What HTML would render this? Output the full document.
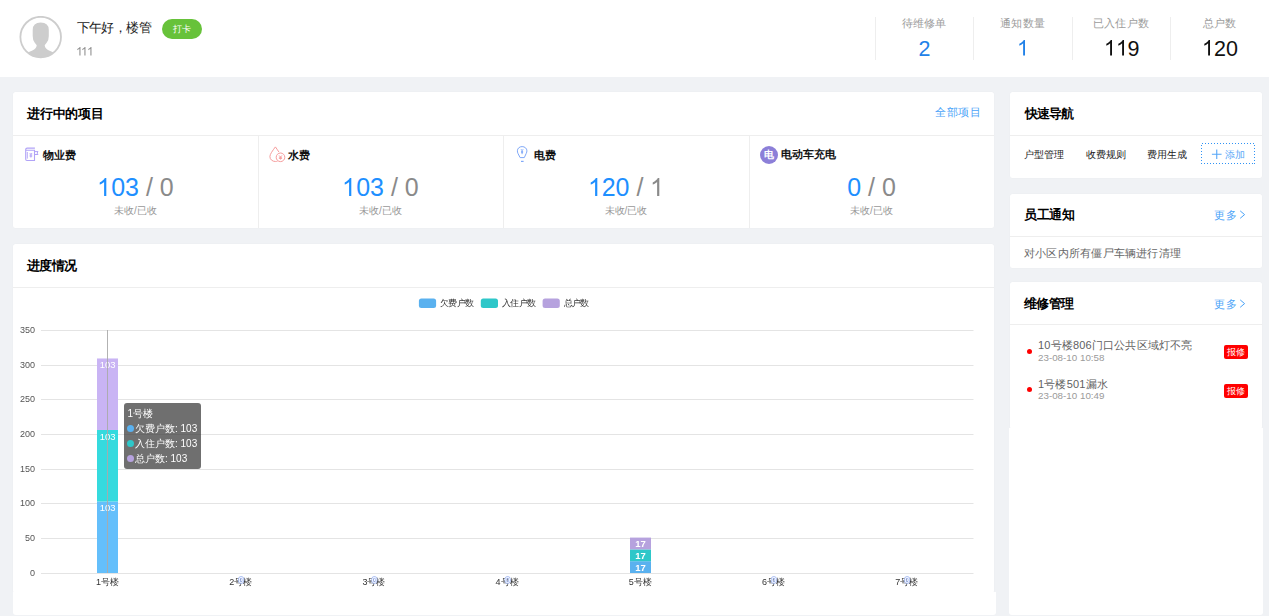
<!DOCTYPE html>
<html><head><meta charset="utf-8">
<style>
*{margin:0;padding:0;box-sizing:border-box}
html,body{width:1269px;height:616px;overflow:hidden;background:#f0f2f5;font-family:"Liberation Sans",sans-serif;color:#303133}
.a{position:absolute;white-space:nowrap}
.panel{position:absolute;background:#fff;border-radius:2.5px;box-shadow:0 0 1.5px rgba(0,0,0,0.045)}
.hdr{position:absolute;left:0;top:0;width:1269px;height:77px;background:#fff}
.sep{position:absolute;height:1px;background:#eeeeee}
.vsep{position:absolute;width:1px;background:#eeeeee}
.title{font-weight:bold;font-size:12.7px;color:#000}
.blue{color:#2181e8}
.link{color:#4aa3f8;font-size:11px;letter-spacing:0.5px}
.num{text-align:center;font-size:25px;color:#1e8fff}
.num .g{color:#8a8a8a}
.sub{text-align:center;font-size:10px;color:#999}
.badge{width:24px;height:14px;background:#f00;color:#fff;border-radius:2px;font-size:8.5px;line-height:14px;text-align:center}
.dot{display:inline-block;width:7px;height:7px;border-radius:50%;margin-right:1px;vertical-align:0}
.one{width:0.5562em;height:0.716em;overflow:visible;fill:currentColor;vertical-align:baseline}
.one3 .one{margin-right:-1.05px}
</style></head><body>
<div class="hdr">
  <!-- avatar -->
  <svg class="a" style="left:19px;top:16px" width="43" height="43" viewBox="0 0 43 43">
    <defs><clipPath id="cc"><circle cx="21.7" cy="21.1" r="20.3"/></clipPath></defs>
    <g clip-path="url(#cc)" fill="#cdcdcd">
      <path d="M13.7 14 Q13.7 6.5 21.7 6.5 Q29.8 6.5 29.8 14 L29.8 20 Q29.8 24 27.8 26.5 L25.7 29.3 Q26 32.8 30 34.5 Q36.5 36.5 38.5 41 L38.5 45 L5 45 L5 41 Q7 36.5 13.4 34.5 Q17.4 32.8 17.7 29.3 L15.6 26.5 Q13.7 24 13.7 20 Z"/>
    </g>
    <circle cx="21.7" cy="21.1" r="20.3" fill="none" stroke="#cdcdcd" stroke-width="1.8"/>
  </svg>
  <div class="a" style="left:76.5px;top:18.7px;font-size:13px;letter-spacing:-0.56px;color:#222">下午好，楼管</div>
  <div class="a" style="left:162px;top:19px;width:40px;height:20px;border-radius:10px;background:#67c23a;color:#fff;font-size:9px;text-align:center;line-height:20px">打卡</div>
  <div class="a one3" style="left:75.5px;top:45px;font-size:12px;color:#8c8c8c"><svg class="one" viewBox="0 -1466 1139 1466"><path transform="scale(1,-1)" d="M763 0H583V1147Q518 1085 412 1023T222 930V1104Q372 1174 484 1274T643 1466H763Z"/></svg><svg class="one" viewBox="0 -1466 1139 1466"><path transform="scale(1,-1)" d="M763 0H583V1147Q518 1085 412 1023T222 930V1104Q372 1174 484 1274T643 1466H763Z"/></svg><svg class="one" viewBox="0 -1466 1139 1466"><path transform="scale(1,-1)" d="M763 0H583V1147Q518 1085 412 1023T222 930V1104Q372 1174 484 1274T643 1466H763Z"/></svg></div>

  <div class="vsep" style="left:875px;top:17px;height:43px"></div>
  <div class="vsep" style="left:973px;top:17px;height:43px"></div>
  <div class="vsep" style="left:1072px;top:17px;height:43px"></div>
  <div class="vsep" style="left:1170px;top:17px;height:43px"></div>

  <div class="a" style="left:875px;width:98px;top:15.5px;text-align:center;font-size:11px;letter-spacing:0.3px;text-indent:0.3px;color:#9c9c9c">待维修单</div>
  <div class="a blue" style="left:875px;width:98px;top:36.6px;text-indent:1.2px;text-align:center;font-size:21.5px">2</div>
  <div class="a" style="left:973px;width:99px;top:15.5px;text-align:center;font-size:11px;letter-spacing:0.3px;text-indent:0.3px;color:#9c9c9c">通知数量</div>
  <div class="a blue" style="left:973px;width:99px;top:36.6px;text-indent:1.2px;text-align:center;font-size:21.5px"><svg class="one" viewBox="0 -1466 1139 1466"><path transform="scale(1,-1)" d="M763 0H583V1147Q518 1085 412 1023T222 930V1104Q372 1174 484 1274T643 1466H763Z"/></svg></div>
  <div class="a" style="left:1072px;width:98px;top:15.5px;text-align:center;font-size:11px;letter-spacing:0.3px;text-indent:0.3px;color:#9c9c9c">已入住户数</div>
  <div class="a" style="left:1072px;width:98px;top:36.6px;text-indent:1.2px;text-align:center;font-size:21.5px;color:#111"><svg class="one" viewBox="0 -1466 1139 1466"><path transform="scale(1,-1)" d="M763 0H583V1147Q518 1085 412 1023T222 930V1104Q372 1174 484 1274T643 1466H763Z"/></svg><svg class="one" viewBox="0 -1466 1139 1466"><path transform="scale(1,-1)" d="M763 0H583V1147Q518 1085 412 1023T222 930V1104Q372 1174 484 1274T643 1466H763Z"/></svg>9</div>
  <div class="a" style="left:1170px;width:99px;top:15.5px;text-align:center;font-size:11px;letter-spacing:0.3px;text-indent:0.3px;color:#9c9c9c">总户数</div>
  <div class="a" style="left:1170px;width:99px;top:36.6px;text-indent:1.2px;text-align:center;font-size:21.5px;color:#111"><svg class="one" viewBox="0 -1466 1139 1466"><path transform="scale(1,-1)" d="M763 0H583V1147Q518 1085 412 1023T222 930V1104Q372 1174 484 1274T643 1466H763Z"/></svg>20</div>
</div>

<!-- 进行中的项目 -->
<div class="panel" style="left:13px;top:92px;width:981px;height:136px"></div>
<div class="a title" style="left:27px;top:105.6px;letter-spacing:-0.24px">进行中的项目</div>
<div class="a link" style="left:935px;top:104.9px">全部项目</div>
<div class="sep" style="left:13px;top:135px;width:981px"></div>
<div class="vsep" style="left:258px;top:136px;height:92px"></div>
<div class="vsep" style="left:503px;top:136px;height:92px"></div>
<div class="vsep" style="left:749px;top:136px;height:92px"></div>


<!-- 快速导航 -->
<div class="panel" style="left:1010px;top:92px;width:252px;height:86px"></div>
<div class="a title" style="left:1024.5px;top:105.6px;letter-spacing:-0.8px">快速导航</div>
<div class="sep" style="left:1010px;top:135px;width:252px"></div>

<!-- 员工通知 -->
<div class="panel" style="left:1010px;top:194px;width:252px;height:74px"></div>
<div class="a title" style="left:1024.1px;top:206.5px;letter-spacing:-0.43px">员工通知</div>
<div class="sep" style="left:1010px;top:236px;width:252px"></div>

<!-- 维修管理 -->
<div class="panel" style="left:1010px;top:282px;width:252px;height:147px"></div>
<div class="panel" style="left:1009px;top:428px;width:254px;height:186.5px;border-radius:0 0 3px 3px;box-shadow:none"></div>
<div class="a title" style="left:1023.6px;top:295.5px;letter-spacing:-0.5px">维修管理</div>
<div class="sep" style="left:1010px;top:324px;width:252px"></div>

<!-- 进度情况 -->
<div class="panel" style="left:13px;top:244px;width:981px;height:349px"></div>
<div class="panel" style="left:12.5px;top:592px;width:983px;height:22.5px;border-radius:0 0 3px 3px;box-shadow:none"></div>
<div class="a title" style="left:26.8px;top:257.8px;letter-spacing:-0.5px">进度情况</div>
<div class="sep" style="left:13px;top:287px;width:981px"></div>


<!-- project cols -->
<svg class="a" style="left:22px;top:144px" width="20" height="20" viewBox="0 0 20 20" fill="none" stroke="#b1a3f7" stroke-width="1.1">
  <path d="M12.9 4.1 H5.2 Q3.7 4.1 3.7 5.6 V15.3 Q3.7 16.5 4.9 16.5 H12.5 V6.3 H3.7"/><path d="M5.3 8 V14.6" stroke-width="0.9"/>
  <path d="M12.5 7.6 H16 L15.1 9.1 L16 10.5 H12.5" stroke-width="1"/>
  <path d="M7.7 9 L8.9 10.4 L10.1 9 M8.9 10.4 V13.6 M7.6 11 H10.2 M7.6 12.2 H10.2" stroke-width="0.9"/>
</svg>
<div class="a" style="left:43px;top:148px;font-size:11.3px;font-weight:bold;color:#111">物业费</div>
<svg class="a" style="left:266px;top:144px" width="22" height="22" viewBox="0 0 22 22" fill="none" stroke="#f69c9c" stroke-width="1">
  <path d="M12.9 8 C11.5 5.9 10.4 4.3 9.4 2.9 C6.5 6.8 3.9 10.2 3.9 12.6 C3.9 15.4 6.4 17.5 9.4 17.5 C10.2 17.5 10.9 17.4 11.6 17.1"/>
  <circle cx="14.5" cy="13.3" r="4.3"/>
  <path d="M13 11.4 L14.5 13 L16 11.4 M14.5 13 V15.6 M12.9 13.3 H16.1 M12.9 14.5 H16.1" stroke-width="0.85"/>
</svg>
<div class="a" style="left:288px;top:148px;font-size:11.3px;font-weight:bold;color:#111">水费</div>
<svg class="a" style="left:512px;top:144px" width="20" height="20" viewBox="0 0 20 20" fill="none" stroke="#7fa8f8" stroke-width="1">
  <path d="M8.1 13.6 L6 9.5 C5.5 8.5 5.4 7.6 5.4 6.8 C5.4 4.4 7.4 2.6 10.1 2.6 C12.8 2.6 14.9 4.4 14.9 6.8 C14.9 7.6 14.7 8.5 14.2 9.5 L12.3 13.6 Z"/>
  <path d="M9 17.4 H11.6" stroke-width="1.2"/>
  <path d="M9 5.2 L10.1 6.5 L11.2 5.2 M10.1 6.5 V10.2 M9.1 7.4 H11.1 M9.1 8.6 H11.1" stroke-width="0.9"/>
</svg>
<div class="a" style="left:534px;top:148px;font-size:11.3px;font-weight:bold;color:#111">电费</div>
<div class="a" style="left:760px;top:146px;width:18px;height:18px;border-radius:50%;background:#8c7fd8;color:#fff;font-size:10px;font-weight:bold;text-align:center;line-height:18px">电</div>
<div class="a" style="left:781px;top:147px;font-size:11.3px;font-weight:bold;color:#111">电动车充电</div>

<div class="a num" style="left:13px;width:245px;top:173px"><svg class="one" viewBox="0 -1466 1139 1466"><path transform="scale(1,-1)" d="M763 0H583V1147Q518 1085 412 1023T222 930V1104Q372 1174 484 1274T643 1466H763Z"/></svg>03<span class="g"> / 0</span></div>
<div class="a sub" style="left:13px;width:245px;top:204px">未收/已收</div>
<div class="a num" style="left:258px;width:245px;top:173px"><svg class="one" viewBox="0 -1466 1139 1466"><path transform="scale(1,-1)" d="M763 0H583V1147Q518 1085 412 1023T222 930V1104Q372 1174 484 1274T643 1466H763Z"/></svg>03<span class="g"> / 0</span></div>
<div class="a sub" style="left:258px;width:245px;top:204px">未收/已收</div>
<div class="a num" style="left:503px;width:246px;top:173px"><svg class="one" viewBox="0 -1466 1139 1466"><path transform="scale(1,-1)" d="M763 0H583V1147Q518 1085 412 1023T222 930V1104Q372 1174 484 1274T643 1466H763Z"/></svg>20<span class="g"> / <svg class="one" viewBox="0 -1466 1139 1466"><path transform="scale(1,-1)" d="M763 0H583V1147Q518 1085 412 1023T222 930V1104Q372 1174 484 1274T643 1466H763Z"/></svg></span></div>
<div class="a sub" style="left:503px;width:246px;top:204px">未收/已收</div>
<div class="a num" style="left:749px;width:245px;top:173px">0<span class="g"> / 0</span></div>
<div class="a sub" style="left:749px;width:245px;top:204px">未收/已收</div>

<!-- quick nav -->
<div class="a" style="left:1024px;top:148px;font-size:10px;color:#222">户型管理</div>
<div class="a" style="left:1086px;top:148px;font-size:10px;color:#222">收费规则</div>
<div class="a" style="left:1147px;top:148px;font-size:10px;color:#222">费用生成</div>
<svg class="a" style="left:1201px;top:143px" width="55" height="22" viewBox="0 0 55 22" fill="none" shape-rendering="crispEdges">
  <rect x="0.5" y="0.5" width="53" height="20" stroke="#2f93f5" stroke-width="1" stroke-dasharray="1 2"/>
  <path d="M10.9 11.2 H20.6 M15.75 6.4 V15.9" stroke="#55a6f8" stroke-width="1.1" shape-rendering="auto"/>
</svg>
<div class="a" style="left:1224.5px;top:147.5px;font-size:10px;color:#5aa7f7">添加</div>

<!-- notice -->
<div class="a link" style="left:1214px;top:208px">更多</div><svg class="a" style="left:1238px;top:208px" width="10" height="13" viewBox="0 0 10 13" fill="none" stroke="#4aa3f8" stroke-width="1"><path d="M2.2 2.9 L6.6 6.6 L2.2 10.3"/></svg>
<div class="a" style="left:1024px;top:246px;font-size:11px;letter-spacing:0.22px;color:#666">对小区内所有僵尸车辆进行清理</div>

<!-- repair -->
<div class="a link" style="left:1214px;top:297px">更多</div><svg class="a" style="left:1238px;top:297px" width="10" height="13" viewBox="0 0 10 13" fill="none" stroke="#4aa3f8" stroke-width="1"><path d="M2.2 2.9 L6.6 6.6 L2.2 10.3"/></svg>
<div class="a" style="left:1027px;top:349px;width:5px;height:5px;border-radius:50%;background:#f00"></div>
<div class="a" style="left:1038px;top:338.4px;font-size:11px;letter-spacing:0.19px;color:#5f5f5f">10号楼806门口公共区域灯不亮</div>
<div class="a" style="left:1038px;top:352.1px;font-size:9.8px;color:#9a9a9a">23-08-10 10:58</div>
<div class="a badge" style="left:1224px;top:345px">报修</div>
<div class="a" style="left:1027px;top:387px;width:5px;height:5px;border-radius:50%;background:#f00"></div>
<div class="a" style="left:1038px;top:376.5px;font-size:11px;letter-spacing:0.19px;color:#5f5f5f">1号楼501漏水</div>
<div class="a" style="left:1038px;top:390.2px;font-size:9.8px;color:#9a9a9a">23-08-10 10:49</div>
<div class="a badge" style="left:1224px;top:384px">报修</div>
<!--chart-->
<svg class="a" style="left:0;top:0;will-change:transform" width="1269" height="616" viewBox="0 0 1269 616" font-family="Liberation Sans, sans-serif">
<rect x="418.9" y="298.4" width="17.2" height="9.6" rx="2.5" fill="#5ab1ef"/>
<text x="439.9" y="306.3" font-size="9" letter-spacing="-0.55" fill="#333">欠费户数</text>
<rect x="480.8" y="298.4" width="17.2" height="9.6" rx="2.5" fill="#2ec7c9"/>
<text x="501.8" y="306.3" font-size="9" letter-spacing="-0.55" fill="#333">入住户数</text>
<rect x="542.6" y="298.4" width="17.2" height="9.6" rx="2.5" fill="#b6a2de"/>
<text x="563.6" y="306.3" font-size="9" letter-spacing="-0.55" fill="#333">总户数</text>
<rect x="41" y="573" width="932.5" height="1" fill="#e4e4e4"/>
<text x="35" y="575.60" font-size="9" fill="#555" text-anchor="end">0</text>
<rect x="41" y="538" width="932.5" height="1" fill="#e4e4e4"/>
<text x="35" y="540.60" font-size="9" fill="#555" text-anchor="end">50</text>
<rect x="41" y="503" width="932.5" height="1" fill="#e4e4e4"/>
<text x="35" y="505.60" font-size="9" fill="#555" text-anchor="end">100</text>
<rect x="41" y="469" width="932.5" height="1" fill="#e4e4e4"/>
<text x="35" y="471.60" font-size="9" fill="#555" text-anchor="end">150</text>
<rect x="41" y="434" width="932.5" height="1" fill="#e4e4e4"/>
<text x="35" y="436.60" font-size="9" fill="#555" text-anchor="end">200</text>
<rect x="41" y="399" width="932.5" height="1" fill="#e4e4e4"/>
<text x="35" y="401.60" font-size="9" fill="#555" text-anchor="end">250</text>
<rect x="41" y="365" width="932.5" height="1" fill="#e4e4e4"/>
<text x="35" y="367.60" font-size="9" fill="#555" text-anchor="end">300</text>
<rect x="41" y="330" width="932.5" height="1" fill="#e4e4e4"/>
<text x="35" y="332.60" font-size="9" fill="#555" text-anchor="end">350</text>
<rect x="97" y="501.49" width="21" height="71.51" fill="#64bffb"/>
<rect x="97" y="429.98" width="21" height="71.51" fill="#35dade"/>
<rect x="97" y="358.47" width="21" height="71.51" fill="#c9b4f4"/>
<rect x="630" y="561.20" width="21" height="11.80" fill="#5ab1ef"/>
<rect x="630" y="549.39" width="21" height="11.80" fill="#2ec7c9"/>
<rect x="630" y="537.59" width="21" height="11.80" fill="#b6a2de"/>
<text x="107.6" y="511.19" font-size="9.5" fill="#fff" text-anchor="middle">103</text>
<text x="107.6" y="439.68" font-size="9.5" fill="#fff" text-anchor="middle">103</text>
<text x="107.6" y="368.17" font-size="9.5" fill="#fff" text-anchor="middle">103</text>
<text x="640.5" y="570.50" font-size="9.5" font-weight="bold" fill="#fff" text-anchor="middle">17</text>
<text x="640.5" y="559.29" font-size="9.5" font-weight="bold" fill="#fff" text-anchor="middle">17</text>
<text x="640.5" y="547.49" font-size="9.5" font-weight="bold" fill="#fff" text-anchor="middle">17</text>
<rect x="107" y="330" width="1" height="243" fill="#aaaaaa" fill-opacity="0.9"/>
<text x="107.50" y="585.2" font-size="9" fill="#333" text-anchor="middle">1号楼</text>
<text x="240.70" y="585.2" font-size="9" fill="#333" text-anchor="middle">2号楼</text>
<text x="373.90" y="585.2" font-size="9" fill="#333" text-anchor="middle">3号楼</text>
<text x="507.10" y="585.2" font-size="9" fill="#333" text-anchor="middle">4号楼</text>
<text x="640.30" y="585.2" font-size="9" fill="#333" text-anchor="middle">5号楼</text>
<text x="773.50" y="585.2" font-size="9" fill="#333" text-anchor="middle">6号楼</text>
<text x="906.70" y="585.2" font-size="9" fill="#333" text-anchor="middle">7号楼</text>
<text x="241.20" y="583.3" font-size="9.5" fill="#fff" stroke="#9db4f0" stroke-width="1.6" paint-order="stroke" text-anchor="middle">0</text>
<text x="374.40" y="583.3" font-size="9.5" fill="#fff" stroke="#9db4f0" stroke-width="1.6" paint-order="stroke" text-anchor="middle">0</text>
<text x="507.60" y="583.3" font-size="9.5" fill="#fff" stroke="#9db4f0" stroke-width="1.6" paint-order="stroke" text-anchor="middle">0</text>
<text x="774.00" y="583.3" font-size="9.5" fill="#fff" stroke="#9db4f0" stroke-width="1.6" paint-order="stroke" text-anchor="middle">0</text>
<text x="907.20" y="583.3" font-size="9.5" fill="#fff" stroke="#9db4f0" stroke-width="1.6" paint-order="stroke" text-anchor="middle">0</text>
</svg>
<div class="a" style="left:124px;top:403px;width:77px;height:66px;border-radius:3px;background:rgba(50,50,50,0.7);color:#fff;font-size:10px">
<div class="a" style="left:3.5px;top:4px">1号楼</div>
<div class="a" style="left:3px;top:19px"><span class="dot" style="background:#5ab1ef"></span>欠费户数: 103</div>
<div class="a" style="left:3px;top:34px"><span class="dot" style="background:#2ec7c9"></span>入住户数: 103</div>
<div class="a" style="left:3px;top:48.5px"><span class="dot" style="background:#b6a2de"></span>总户数: 103</div>
</div>
</body></html>
